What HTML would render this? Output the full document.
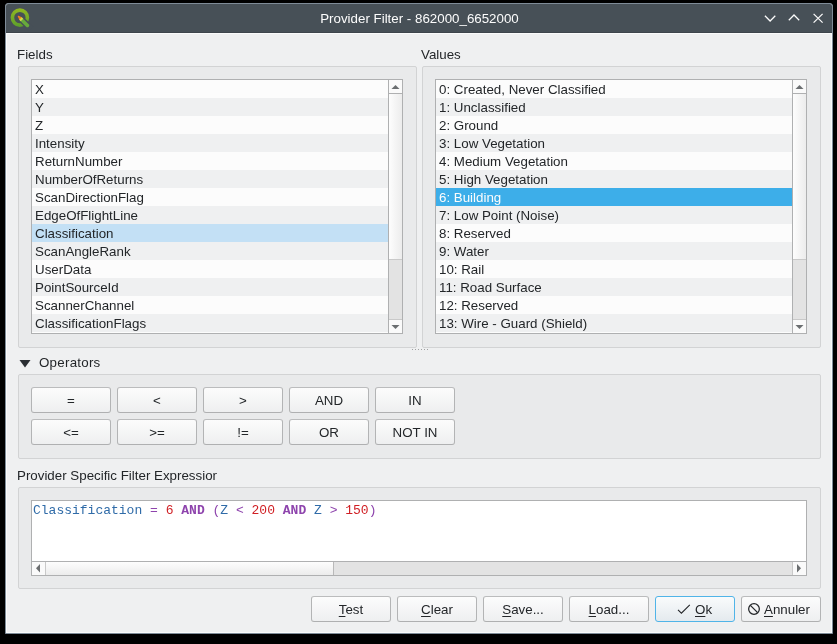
<!DOCTYPE html>
<html><head><meta charset="utf-8">
<style>
*{box-sizing:border-box;margin:0;padding:0}
html,body{width:837px;height:644px;overflow:hidden;background:#000;font-family:"Liberation Sans",sans-serif;font-size:13.33px;color:#232629;position:relative;will-change:transform}
.a{position:absolute}
#win{left:5px;top:3px;width:828px;height:631px;background:#fafbfb;border-radius:3px 3px 0 0;border:1px solid #7f8c98}
#inner{left:7px;top:34px;width:824px;height:598px;background:#eff0f1}
#title{left:6px;top:4px;width:826px;height:29px;background:#475057;border-bottom:1px solid #3e454c;border-radius:2px 2px 0 0}
#titletext{left:7px;top:4px;width:825px;text-align:center;line-height:30px;color:#fcfcfc}
.lbl{position:absolute;white-space:nowrap;line-height:20px}
.grp{position:absolute;border:1px solid #d2d3d4;border-radius:2px;background:#e9eaeb}
.list{position:absolute;background:#fcfcfc;border:1px solid #afb0b1;overflow:hidden}
.row{position:absolute;left:0;height:18px;width:100%;line-height:20px;padding-left:3px;white-space:nowrap}
.alt{background:#eff0f1}
.sel1{background:#c3e0f5}
.sel2{background:#3daee9;color:#fcfcfc}
.vs{position:absolute;top:0;right:0;width:14px;bottom:0;border-left:1px solid #afb0b1;background:linear-gradient(to right,#fdfdfd,#ececec)}
.vsup{position:absolute;left:0;top:0;width:13px;height:14px;border-bottom:1px solid #afb0b1;background:#fafafa}
.vshandle{position:absolute;left:0;top:179px;width:13px;height:60px;background:#e3e3e3;border-top:1px solid #c9c9c9}
.vsdown{position:absolute;left:0;bottom:0;width:13px;height:14px;border-top:1px solid #c9c9c9;background:#fafafa}
.btn{position:absolute;border:1px solid #b4b5b6;border-radius:3px;background:linear-gradient(#fcfcfc,#eeeff0);text-align:center;line-height:25px;white-space:nowrap;height:26px;width:80px;border-color:#bbbcbd #b3b4b5 #afb0b1}
.u{text-decoration:underline;text-underline-offset:2px;text-decoration-thickness:1px}
.mono{font-family:"Liberation Mono",monospace;font-size:13px}
</style></head>
<body>
<div id="win" class="a"></div>
<div id="inner" class="a"></div>
<div id="title" class="a"></div>
<div id="titletext" class="a">Provider Filter - 862000_6652000</div>
<svg class="a" style="left:0;top:0" width="40" height="34" viewBox="0 0 40 34">
  <defs><linearGradient id="qg" x1="0" y1="8" x2="0" y2="27" gradientUnits="userSpaceOnUse"><stop offset="0" stop-color="#93b921"/><stop offset="1" stop-color="#5c9f2c"/></linearGradient></defs>
  <circle cx="19.9" cy="17.6" r="7.5" fill="none" stroke="url(#qg)" stroke-width="3.6"/>
  <path d="M21 19 L31 29" stroke="#475057" stroke-width="6.6"/>
  <path d="M21.2 19.2 L27.4 25.4" stroke="#68aa3c" stroke-width="3.6" stroke-linecap="round"/>
  <path d="M18.3 16.3 L21.4 17.9 L19.9 19.4 Z" fill="#f4801f" stroke="#f4801f" stroke-width="1.2" stroke-linejoin="round"/>
  <path d="M20.5 18.5 L22 20" stroke="#d6d94a" stroke-width="3.6"/>
</svg>
<svg class="a" style="left:760px;top:10px" width="70" height="18" viewBox="0 0 70 18">
  <path d="M4.9 5.8 L10.1 11 L15.3 5.8" fill="none" stroke="#fcfcfc" stroke-width="1.25"/>
  <path d="M28.8 10.2 L34 5 L39.2 10.2" fill="none" stroke="#fcfcfc" stroke-width="1.25"/>
  <path d="M53.6 3.9 L62.6 12.6 M62.6 3.9 L53.6 12.6" fill="none" stroke="#fcfcfc" stroke-width="1.25"/>
</svg>

<div class="lbl" style="left:17px;top:45px">Fields</div>
<div class="grp" style="left:18px;top:66px;width:399px;height:282px"></div>
<div class="list" style="left:31px;top:79px;width:372px;height:255px">
<div class="row" style="top:0px">X</div>
<div class="row alt" style="top:18px">Y</div>
<div class="row" style="top:36px">Z</div>
<div class="row alt" style="top:54px">Intensity</div>
<div class="row" style="top:72px">ReturnNumber</div>
<div class="row alt" style="top:90px">NumberOfReturns</div>
<div class="row" style="top:108px">ScanDirectionFlag</div>
<div class="row alt" style="top:126px">EdgeOfFlightLine</div>
<div class="row sel1" style="top:144px">Classification</div>
<div class="row alt" style="top:162px">ScanAngleRank</div>
<div class="row" style="top:180px">UserData</div>
<div class="row alt" style="top:198px">PointSourceId</div>
<div class="row" style="top:216px">ScannerChannel</div>
<div class="row alt" style="top:234px">ClassificationFlags</div>
<div class="vs"><div class="vsup"><svg width="13" height="13" class="a" style="left:0;top:0"><path d="M2.5 9 L6.5 5 L10.5 9 Z" fill="#6b6e70"/></svg></div><div class="vshandle"></div><div class="vsdown"><svg width="13" height="13" class="a" style="left:0;top:0"><path d="M2.5 5 L6.5 9 L10.5 5 Z" fill="#6b6e70"/></svg></div></div>
</div>

<div class="lbl" style="left:421px;top:45px">Values</div>
<div class="grp" style="left:422px;top:66px;width:399px;height:282px"></div>
<div class="list" style="left:435px;top:79px;width:372px;height:255px">
<div class="row" style="top:0px">0: Created, Never Classified</div>
<div class="row alt" style="top:18px">1: Unclassified</div>
<div class="row" style="top:36px">2: Ground</div>
<div class="row alt" style="top:54px">3: Low Vegetation</div>
<div class="row" style="top:72px">4: Medium Vegetation</div>
<div class="row alt" style="top:90px">5: High Vegetation</div>
<div class="row sel2" style="top:108px">6: Building</div>
<div class="row alt" style="top:126px">7: Low Point (Noise)</div>
<div class="row" style="top:144px">8: Reserved</div>
<div class="row alt" style="top:162px">9: Water</div>
<div class="row" style="top:180px">10: Rail</div>
<div class="row alt" style="top:198px">11: Road Surface</div>
<div class="row" style="top:216px">12: Reserved</div>
<div class="row alt" style="top:234px">13: Wire - Guard (Shield)</div>
<div class="vs"><div class="vsup"><svg width="13" height="13" class="a" style="left:0;top:0"><path d="M2.5 9 L6.5 5 L10.5 9 Z" fill="#6b6e70"/></svg></div><div class="vshandle"></div><div class="vsdown"><svg width="13" height="13" class="a" style="left:0;top:0"><path d="M2.5 5 L6.5 9 L10.5 5 Z" fill="#6b6e70"/></svg></div></div>
</div>
<div class="a" style="left:412px;top:349px;width:16px;height:1px;background:repeating-linear-gradient(to right,#a0a1a2 0,#a0a1a2 1px,transparent 1px,transparent 3px)"></div>

<svg class="a" style="left:18px;top:356px" width="14" height="14"><path d="M1.5 4 L12.5 4 L7 11.5 Z" fill="#2a2e32"/></svg>
<div class="lbl" style="left:39px;top:353px;letter-spacing:0.25px">Operators</div>
<div class="grp" style="left:18px;top:374px;width:803px;height:85px"></div>
<div class="btn" style="left:31px;top:387px">=</div>
<div class="btn" style="left:117px;top:387px">&lt;</div>
<div class="btn" style="left:203px;top:387px">&gt;</div>
<div class="btn" style="left:289px;top:387px">AND</div>
<div class="btn" style="left:375px;top:387px">IN</div>
<div class="btn" style="left:31px;top:419px">&lt;=</div>
<div class="btn" style="left:117px;top:419px">&gt;=</div>
<div class="btn" style="left:203px;top:419px">!=</div>
<div class="btn" style="left:289px;top:419px">OR</div>
<div class="btn" style="left:375px;top:419px">NOT IN</div>

<div class="lbl" style="left:17px;top:466px;width:200px;overflow:hidden">Provider Specific Filter Expression</div>
<div class="grp" style="left:18px;top:487px;width:803px;height:102px"></div>
<div class="a" style="left:31px;top:500px;width:776px;height:76px;background:#fff;border:1px solid #afb0b1"></div>
<div class="a mono" style="left:33px;top:502px;line-height:18px;white-space:pre"><span style="color:#2f6ba8">Classification</span> <span style="color:#8e44ad">=</span> <span style="color:#d01f24">6</span> <b style="color:#8e44ad">AND</b> <span style="color:#8e44ad">(</span><span style="color:#2f6ba8">Z</span> <span style="color:#8e44ad">&lt;</span> <span style="color:#d01f24">200</span> <b style="color:#8e44ad">AND</b> <span style="color:#2f6ba8">Z</span> <span style="color:#8e44ad">&gt;</span> <span style="color:#d01f24">150</span><span style="color:#8e44ad">)</span></div>
<div class="a" style="left:32px;top:561px;width:774px;height:14px;border-top:1px solid #afb0b1;background:#e3e3e3">
  <div class="a" style="left:0;top:0;width:14px;height:13px;border-right:1px solid #c9c9c9;background:#fafafa"><svg width="13" height="13" class="a" style="left:0;top:0"><path d="M8 2 L4 6.3 L8 10.6 Z" fill="#6b6e70"/></svg></div>
  <div class="a" style="left:14px;top:0;width:288px;height:13px;border-right:1px solid #b9b9b9;background:linear-gradient(#fdfdfd,#ececec)"></div>
  <div class="a" style="right:0;top:0;width:14px;height:13px;border-left:1px solid #c9c9c9;background:#fafafa"><svg width="13" height="13" class="a" style="left:0;top:0"><path d="M4 2 L8 6.3 L4 10.6 Z" fill="#6b6e70"/></svg></div>
</div>

<div class="btn" style="left:311px;top:596px"><span class="u">T</span>est</div>
<div class="btn" style="left:397px;top:596px"><span class="u">C</span>lear</div>
<div class="btn" style="left:483px;top:596px"><span class="u">S</span>ave...</div>
<div class="btn" style="left:569px;top:596px"><span class="u">L</span>oad...</div>
<div class="btn" style="left:655px;top:596px;border-color:#50b4e8;background:linear-gradient(#f9fbfc,#e4eaee)"><svg class="a" width="16" height="14" style="left:20px;top:5px"><path d="M2 7.9 L5.4 11.2 L13.8 2.9" fill="none" stroke="#232629" stroke-width="1.1"/></svg><span class="a" style="left:39px;top:0"><span class="u">O</span>k</span></div>
<div class="btn" style="left:741px;top:596px"><svg class="a" width="16" height="16" style="left:4px;top:5px"><circle cx="8" cy="7" r="5.35" fill="none" stroke="#232629" stroke-width="1.25"/><path d="M4.4 3.4 L11.6 10.6" stroke="#232629" stroke-width="1.25"/></svg><span class="a" style="left:22px;top:0"><span class="u">A</span>nnuler</span></div>
</body></html>
